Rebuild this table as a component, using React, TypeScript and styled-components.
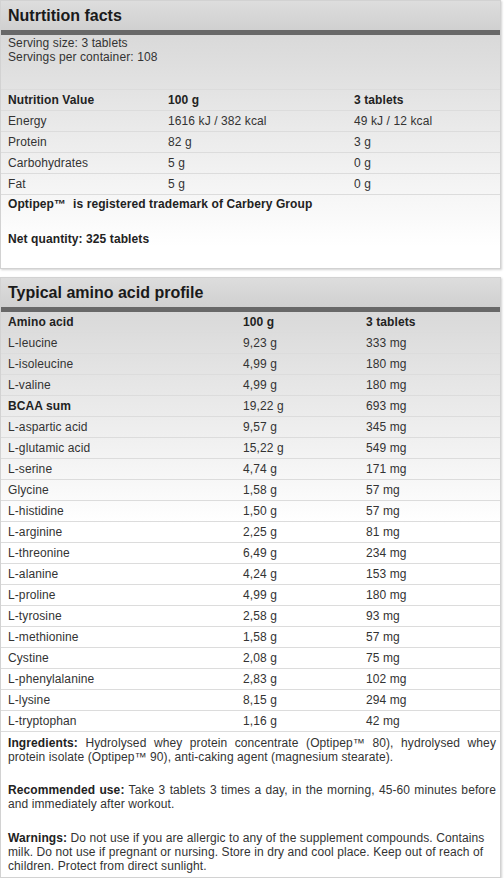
import React from 'react'
import styled, { createGlobalStyle } from 'styled-components'

const GlobalStyle = createGlobalStyle`
  html, body {
    margin: 0;
    padding: 0;
    background: #fff;
  }
  body {
    font-family: "Liberation Sans", Arial, sans-serif;
    font-size: 12px;
    color: #333;
  }
`

const Page = styled.div`
  width: 501px;
  display: flex;
  flex-direction: column;
  gap: 8px;
`

const Panel = styled.section`
  border: 1px solid #d2d2d2;
  box-shadow: 1px 1px 2px rgba(0, 0, 0, 0.18);
  background: linear-gradient(to bottom, #d3d3d3 0, #fff 245px);
`

const PanelHeader = styled.div`
  height: 29px;
  display: flex;
  align-items: center;
  padding: 0 7px;
  background: linear-gradient(to bottom, #dddddd, #d0d0d0);
  border-bottom: 5px solid #686868;
  font-size: 16px;
  font-weight: bold;
  color: #1a1a1a;
`

const PanelBody = styled.div<{ $top?: number; $bottom: number }>`
  padding: ${p => p.$top ?? 1}px 4px ${p => p.$bottom}px 0;
`

const Text = styled.p<{ $before?: number; $after?: number; $justify?: boolean }>`
  margin: ${p => p.$before ?? 0}px 0 ${p => p.$after ?? 0}px;
  padding-left: 7px;
  line-height: 14px;
  letter-spacing: 0.1px;
  text-align: ${p => (p.$justify ? 'justify' : 'left')};

  b {
    color: #222;
  }
`

const Table = styled.div<{ $cols: string; $top?: boolean }>`
  display: grid;
  grid-template-columns: ${p => p.$cols};
  margin-right: -4px;
  border-top: ${p => (p.$top ? '1px solid #dcdcdc' : 'none')};
`

const Cell = styled.div<{ $bold?: boolean }>`
  height: 20px;
  line-height: 20px;
  padding-left: 7px;
  border-bottom: 1px solid #dcdcdc;
  white-space: nowrap;
  letter-spacing: 0.1px;
  font-weight: ${p => (p.$bold ? 'bold' : 'normal')};
  color: ${p => (p.$bold ? '#222' : '#333')};
`

const nutrition: [string, string, string][] = [
  ['Energy', '1616 kJ / 382 kcal', '49 kJ / 12 kcal'],
  ['Protein', '82 g', '3 g'],
  ['Carbohydrates', '5 g', '0 g'],
  ['Fat', '5 g', '0 g'],
]

const amino: [string, string, string, boolean?][] = [
  ['L-leucine', '9,23 g', '333 mg'],
  ['L-isoleucine', '4,99 g', '180 mg'],
  ['L-valine', '4,99 g', '180 mg'],
  ['BCAA sum', '19,22 g', '693 mg', true],
  ['L-aspartic acid', '9,57 g', '345 mg'],
  ['L-glutamic acid', '15,22 g', '549 mg'],
  ['L-serine', '4,74 g', '171 mg'],
  ['Glycine', '1,58 g', '57 mg'],
  ['L-histidine', '1,50 g', '57 mg'],
  ['L-arginine', '2,25 g', '81 mg'],
  ['L-threonine', '6,49 g', '234 mg'],
  ['L-alanine', '4,24 g', '153 mg'],
  ['L-proline', '4,99 g', '180 mg'],
  ['L-tyrosine', '2,58 g', '93 mg'],
  ['L-methionine', '1,58 g', '57 mg'],
  ['Cystine', '2,08 g', '75 mg'],
  ['L-phenylalanine', '2,83 g', '102 mg'],
  ['L-lysine', '8,15 g', '294 mg'],
  ['L-tryptophan', '1,16 g', '42 mg'],
]

const App: React.FC = () => (
  <>
    <GlobalStyle />
    <Page>
      <Panel>
        <PanelHeader>Nutrtition facts</PanelHeader>
        <PanelBody $bottom={22}>
          <Text $after={25}>
            Serving size: 3 tablets
            <br />
            Servings per container: 108
          </Text>
          <Table $cols="160px 186px 1fr" $top>
            <Cell $bold>Nutrition Value</Cell>
            <Cell $bold>100 g</Cell>
            <Cell $bold>3 tablets</Cell>
            {nutrition.map(([name, per100, perServing]) => (
              <React.Fragment key={name}>
                <Cell>{name}</Cell>
                <Cell>{per100}</Cell>
                <Cell>{perServing}</Cell>
              </React.Fragment>
            ))}
          </Table>
          <Text $before={2} $after={21}>
            <b>Optipep™ &nbsp;is registered trademark of Carbery Group</b>
          </Text>
          <Text>
            <b>Net quantity: 325 tablets</b>
          </Text>
        </PanelBody>
      </Panel>

      <Panel>
        <PanelHeader>Typical amino acid profile</PanelHeader>
        <PanelBody $top={0} $bottom={4}>
          <Table $cols="235px 123px 1fr">
            <Cell $bold>Amino acid</Cell>
            <Cell $bold>100 g</Cell>
            <Cell $bold>3 tablets</Cell>
            {amino.map(([name, per100, perServing, bold]) => (
              <React.Fragment key={name}>
                <Cell $bold={bold}>{name}</Cell>
                <Cell>{per100}</Cell>
                <Cell>{perServing}</Cell>
              </React.Fragment>
            ))}
          </Table>
          <Text $justify $before={4} $after={19}>
            <b>Ingredients:</b> Hydrolysed whey protein concentrate (Optipep™ 80), hydrolysed whey
            protein isolate (Optipep™ 90), anti-caking agent (magnesium stearate).
          </Text>
          <Text $justify $after={20}>
            <b>Recommended use:</b> Take 3 tablets 3 times a day, in the morning, 45-60 minutes before
            and immediately after workout.
          </Text>
          <Text>
            <b>Warnings:</b> Do not use if you are allergic to any of the supplement compounds. Contains
            milk. Do not use if pregnant or nursing. Store in dry and cool place. Keep out of reach of
            children. Protect from direct sunlight.
          </Text>
        </PanelBody>
      </Panel>
    </Page>
  </>
)

export default App
